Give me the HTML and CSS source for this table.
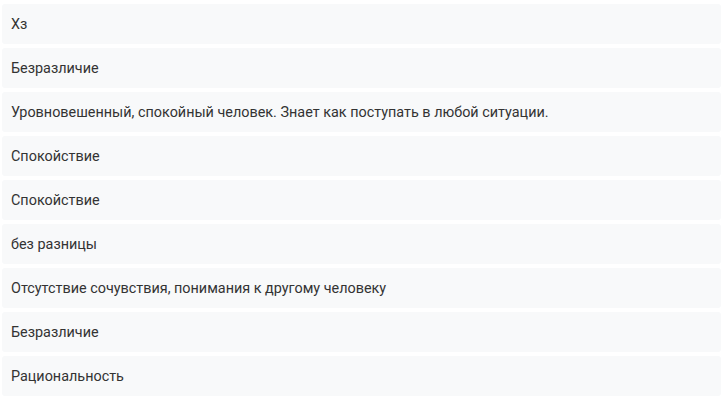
FILE: index.html
```html
<!DOCTYPE html>
<html lang="ru">
<head>
<meta charset="utf-8">
<link rel="stylesheet" href="styles.css">
</head>
<body>
<ul class="list">
<li class="item">Хз</li>
<li class="item">Безразличие</li>
<li class="item">Уровновешенный, спокойный человек. Знает как поступать в любой ситуации.</li>
<li class="item">Спокойствие</li>
<li class="item">Спокойствие</li>
<li class="item">без разницы</li>
<li class="item">Отсутствие сочувствия, понимания к другому человеку</li>
<li class="item">Безразличие</li>
<li class="item">Рациональность</li>
</ul>
</body>
</html>
```
FILE: styles.css
```css
html, body {
  margin: 0;
  padding: 0;
  background: #ffffff;
}
body {
  font-family: Roboto, "Liberation Sans", sans-serif;
  font-size: 14.4px;
  color: #333333;
}
.list {
  list-style: none;
  margin: 0;
  padding: 4px 5px 0 2px;
  display: flex;
  flex-direction: column;
  gap: 4px;
}
.item {
  height: 40px;
  box-sizing: border-box;
  padding: 0 9px;
  display: flex;
  align-items: center;
  background: #f8f9fa;
  border-radius: 3px;
}
```
